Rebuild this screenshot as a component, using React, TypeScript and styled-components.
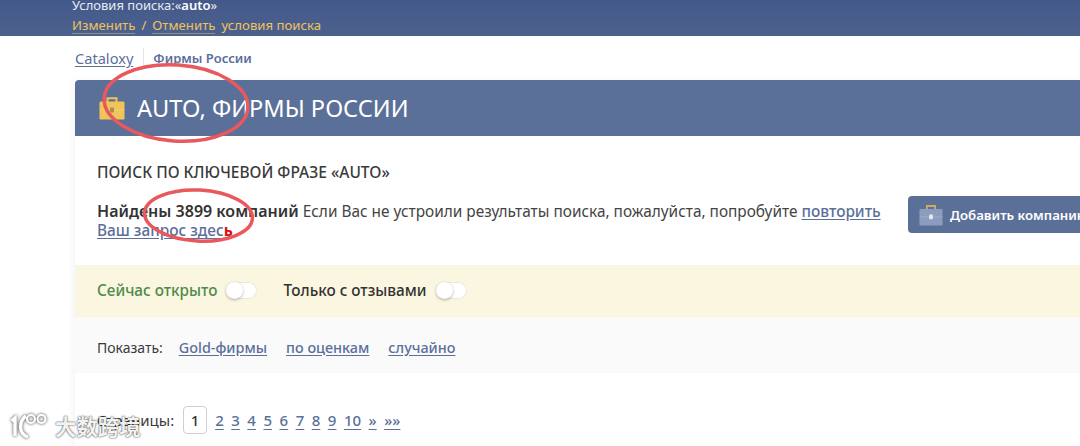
import React from 'react'
import styled, { createGlobalStyle } from 'styled-components'

const GlobalStyle = createGlobalStyle`
  html, body {
    margin: 0;
    padding: 0;
    width: 1080px;
    height: 446px;
    overflow: hidden;
    background: #fff;
    font-family: 'Noto Sans', 'Open Sans', sans-serif;
    color: #3b3b3b;
  }
`

const Page = styled.div`
  position: relative;
  width: 1080px;
  height: 446px;
  overflow: hidden;
`

const TopBar = styled.div`
  height: 36px;
  box-sizing: border-box;
  padding-left: 72px;
  background: linear-gradient(#43598a, #4d618d);
  font-size: 13px;
  color: #e8ebf2;
`

const SearchTerm = styled.div`
  line-height: 10px;
  b { color: #fff; font-weight: 600; }
`

const TopLinks = styled.div`
  display: flex;
  gap: 6px;
  margin-top: 7px;
  line-height: 16px;
  font-size: 13.2px;
  color: #eec25f;
`

const TopLink = styled.a`
  border-bottom: 1px solid #8b8f90;
`

const Content = styled.div`
  margin-left: 75px;
  width: 1100px;
`

const Crumbs = styled.div`
  display: flex;
  align-items: center;
  height: 44px;
  font-size: 14.6px;
`

const CrumbLink = styled.a`
  color: #5b6f9a;
  text-decoration: underline;
  text-underline-offset: 2px;
  padding-right: 10px;
  border-right: 1px solid #e4e4e4;
  line-height: 20px;
`

const CrumbCurrent = styled.span`
  color: #5b6f9a;
  font-size: 13px;
  font-weight: 600;
  margin-left: 9px;
`

const Card = styled.div`
  box-shadow: -3px 0 6px rgba(90, 100, 130, 0.06);
  height: 400px;
`

const CardHeader = styled.div`
  display: flex;
  align-items: center;
  gap: 12px;
  height: 56px;
  padding-left: 24px;
  background: #5b7099;
  border-radius: 4px 4px 0 0;
`

const CardTitle = styled.h1`
  margin: 0;
  color: #fff;
  font-size: 23.6px;
  font-weight: 400;
`

const Intro = styled.div`
  display: flex;
  height: 129px;
  box-sizing: border-box;
  padding: 26px 0 0 22px;
`

const IntroText = styled.div`
  width: 811px;
`

const SearchHeading = styled.h2`
  margin: 0 0 20px;
  font-size: 15.5px;
  line-height: 20px;
  font-weight: 500;
  color: #3a3a3a;
`

const Found = styled.p`
  margin: 0;
  font-size: 15.4px;
  line-height: 19px;
  color: #444;
  b { font-weight: 600; font-size: 16px; color: #333; }
`

const TextLink = styled.a`
  color: #5b6f9a;
  font-weight: 500;
  text-decoration: underline;
  text-underline-offset: 2px;
`

const RedLetter = styled.span`
  color: #d8101a;
  font-weight: 700;
`

const AddButton = styled.button`
  display: flex;
  align-items: center;
  gap: 7px;
  flex: none;
  align-self: flex-start;
  width: 220px;
  height: 37px;
  margin-top: 34px;
  padding: 0 0 0 11px;
  border: 0;
  border-radius: 4px;
  background: #5b7099;
  color: #fff;
  font: 600 13.2px 'Noto Sans', sans-serif;
  white-space: nowrap;
`

const FilterBand = styled.div`
  display: flex;
  align-items: center;
  height: 52px;
  box-sizing: border-box;
  padding: 0 0 2px 22px;
  background: #fbf6df;
  font-size: 15.3px;
  font-weight: 500;
`

const FilterLabel = styled.span<{ $open?: boolean }>`
  color: ${p => (p.$open ? '#4f8a4b' : '#333')};
`

const Toggle = styled.span<{ $last?: boolean }>`
  position: relative;
  width: 31px;
  height: 17px;
  margin: 0 ${p => (p.$last ? 0 : '26px')} 0 9px;
  border-radius: 9px;
  background: #fff;
  box-shadow: inset 0 0 0 1px #ebe8da;
  &::before {
    content: '';
    position: absolute;
    left: 0;
    top: 0;
    width: 17px;
    height: 17px;
    border-radius: 50%;
    background: #fff;
    box-shadow: 0 1px 3px rgba(0, 0, 0, 0.3);
  }
`

const SortBand = styled.div`
  display: flex;
  align-items: center;
  height: 56px;
  padding: 4px 0 0 22px;
  box-sizing: border-box;
  background: #fafafb;
  font-size: 14px;
`

const SortLabel = styled.span`
  margin-right: 16px;
`

const SortLink = styled(TextLink)`
  margin-right: 19px;
  font-size: 14.4px;
`

const Pager = styled.div`
  display: flex;
  align-items: center;
  margin-top: 33px;
  padding-left: 22px;
  font-size: 15px;
`

const PagerLabel = styled.span`
  margin-right: 9px;
`

const CurrentPage = styled.span`
  display: flex;
  align-items: center;
  justify-content: center;
  box-sizing: border-box;
  width: 24px;
  height: 28px;
  margin-right: 8px;
  border: 1px solid #cfcfcf;
  border-radius: 4px;
  font-weight: 500;
  color: #333;
`

const PageLink = styled.a`
  margin-right: 7.5px;
  color: #5b6f9a;
  font-weight: 500;
  text-decoration: underline;
  text-underline-offset: 3px;
`

const Marks = styled.svg`
  position: absolute;
  left: 0;
  top: 0;
  pointer-events: none;
`

const Watermark = styled.div`
  position: absolute;
  left: 9px;
  top: 412px;
  display: flex;
  align-items: center;
  gap: 7px;
  color: rgba(255, 255, 255, 0.95);
  font-family: 'Noto Sans CJK SC', sans-serif;
  font-size: 21.4px;
  line-height: 28px;
  font-weight: 700;
  text-shadow: 0 0 2px rgba(0, 0, 0, 0.75), 0 0 1px rgba(0, 0, 0, 0.4);
`

const WatermarkLogo = styled.svg`
  filter: drop-shadow(0 0 1.5px rgba(0, 0, 0, 0.8));
`

const Case: React.FC<{ body: string; lid: string; clasp: string; size: number }> = ({ body, lid, clasp, size }) => (
  <svg width={size} height={size} viewBox="0 0 26 26">
    <path d="M8.5 7V3.2h9V7" fill="none" stroke={lid} strokeWidth="2" />
    <rect x="0.5" y="6.5" width="25" height="18" rx="1.2" fill={body} />
    <path d="M0.5 15h25" stroke="#fff" strokeOpacity="0.18" />
    <rect x="11" y="12.5" width="4" height="5" rx="1" fill={clasp} />
  </svg>
)

const pages = ['2', '3', '4', '5', '6', '7', '8', '9', '10', '»', '»»']

const App: React.FC = () => (
  <Page>
    <GlobalStyle />
    <TopBar>
      <SearchTerm>
        Условия поиска:«<b>auto</b>»
      </SearchTerm>
      <TopLinks>
        <TopLink>Изменить</TopLink>
        <span>/</span>
        <TopLink>Отменить</TopLink>
        <span>условия поиска</span>
      </TopLinks>
    </TopBar>
    <Content>
      <Crumbs>
        <CrumbLink>Cataloxy</CrumbLink>
        <CrumbCurrent>Фирмы России</CrumbCurrent>
      </Crumbs>
      <Card>
        <CardHeader>
          <Case size={26} body="#f1c45a" lid="#f1c45a" clasp="#a88f5a" />
          <CardTitle>AUTO, ФИРМЫ РОССИИ</CardTitle>
        </CardHeader>
        <Intro>
          <IntroText>
            <SearchHeading>ПОИСК ПО КЛЮЧЕВОЙ ФРАЗЕ «AUTO»</SearchHeading>
            <Found>
              <b>Найдены 3899 компаний</b> Если Вас не устроили результаты поиска, пожалуйста, попробуйте{' '}
              <TextLink>повторить</TextLink>
              <br />
              <TextLink>Ваш запрос здес</TextLink>
              <RedLetter>ь</RedLetter>
            </Found>
          </IntroText>
          <AddButton>
            <Case size={24} body="#8c9cbc" lid="#d3a95c" clasp="#e6eaf2" />
            Добавить компанию
          </AddButton>
        </Intro>
        <FilterBand>
          <FilterLabel $open>Сейчас открыто</FilterLabel>
          <Toggle />
          <FilterLabel>Только с отзывами</FilterLabel>
          <Toggle $last />
        </FilterBand>
        <SortBand>
          <SortLabel>Показать:</SortLabel>
          <SortLink>Gold-фирмы</SortLink>
          <SortLink>по оценкам</SortLink>
          <SortLink>случайно</SortLink>
        </SortBand>
        <Pager>
          <PagerLabel>Страницы:</PagerLabel>
          <CurrentPage>1</CurrentPage>
          {pages.map(p => (
            <PageLink key={p}>{p}</PageLink>
          ))}
        </Pager>
      </Card>
    </Content>
    <Marks width="1080" height="446" fill="none" stroke="#e8585c" strokeWidth="3.5">
      <ellipse cx="176" cy="103" rx="72" ry="38" transform="rotate(4 176 103)" />
      <ellipse cx="198.5" cy="215.5" rx="54" ry="25.5" transform="rotate(3 198 215)" />
    </Marks>
    <Watermark>
      <WatermarkLogo width="39" height="26" viewBox="0 0 39 26" fill="none" stroke="#fff" strokeWidth="3.4">
        <path d="M2.5 8 6 5v18" />
        <path d="M17 3C10 8 9 21 19 24" />
        <circle cx="22" cy="6" r="4" strokeWidth="2.2" />
        <circle cx="32.5" cy="6" r="4" strokeWidth="2.2" />
      </WatermarkLogo>
      <span>大数跨境</span>
    </Watermark>
  </Page>
)

export default App
